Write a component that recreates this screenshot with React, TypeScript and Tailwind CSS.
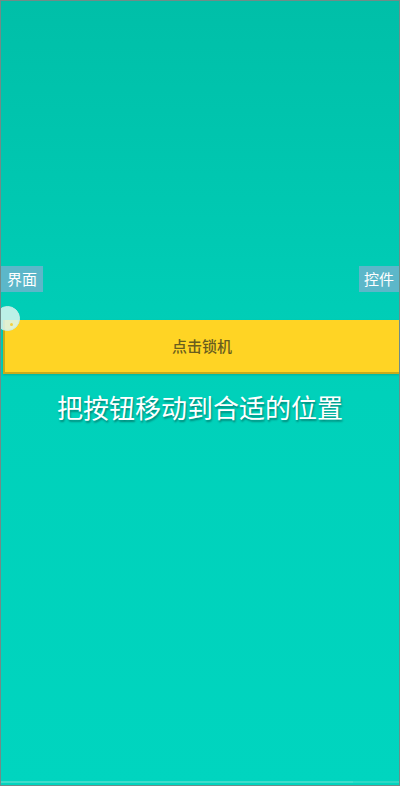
const cjk = { fontFamily: '"Noto Sans CJK SC", "Noto Sans", sans-serif' };

export default function App() {
  return (
    <div
      className="relative flex h-[786px] w-[400px] flex-col overflow-hidden border border-[#6f8c88] bg-gradient-to-b from-[#00bfa8] via-[#00d1ba] to-[#00d5bf]"
      style={cjk}
    >
      {/* label row */}
      <div className="mt-[265px] flex h-[26px] items-stretch justify-between">
        <div className="flex w-[42px] items-center justify-center bg-[#5cb7c9] text-[15px] text-white">界面</div>
        <div className="flex w-[40px] items-center justify-center bg-[#5cb7c9] text-[15px] text-white">控件</div>
      </div>

      {/* lock button */}
      <div className="relative mt-[28px] ml-[2px] flex h-[54px] items-center justify-center border-b-2 border-l-2 border-[#c9ab1c] bg-[#ffd424] shadow-[0_1px_2px_rgba(0,0,0,0.15)]">
        <span className="text-[15px] font-medium text-[#6a5d1e]">点击锁机</span>
        <div className="absolute top-[-14px] left-[-10px] h-[25px] w-[25px] rounded-full border border-[#c7ece6] bg-[#dcf6f0]/85">
          <div className="absolute top-[16px] left-[14px] h-[3px] w-[3px] rounded-full bg-[#f2d040]" />
        </div>
      </div>

      {/* hint */}
      <div className="mt-[16px] text-center text-[26px] leading-[34px] text-white [text-shadow:1px_2px_2px_rgba(0,0,0,0.35)]">
        把按钮移动到合适的位置
      </div>

      <div className="flex-1" />
      <div className="mb-[2px] flex h-[2px]">
        <div className="w-[352px] bg-[#3fdcc9]" />
        <div className="flex-1 bg-[#2ed8c4]" />
      </div>
    </div>
  );
}
